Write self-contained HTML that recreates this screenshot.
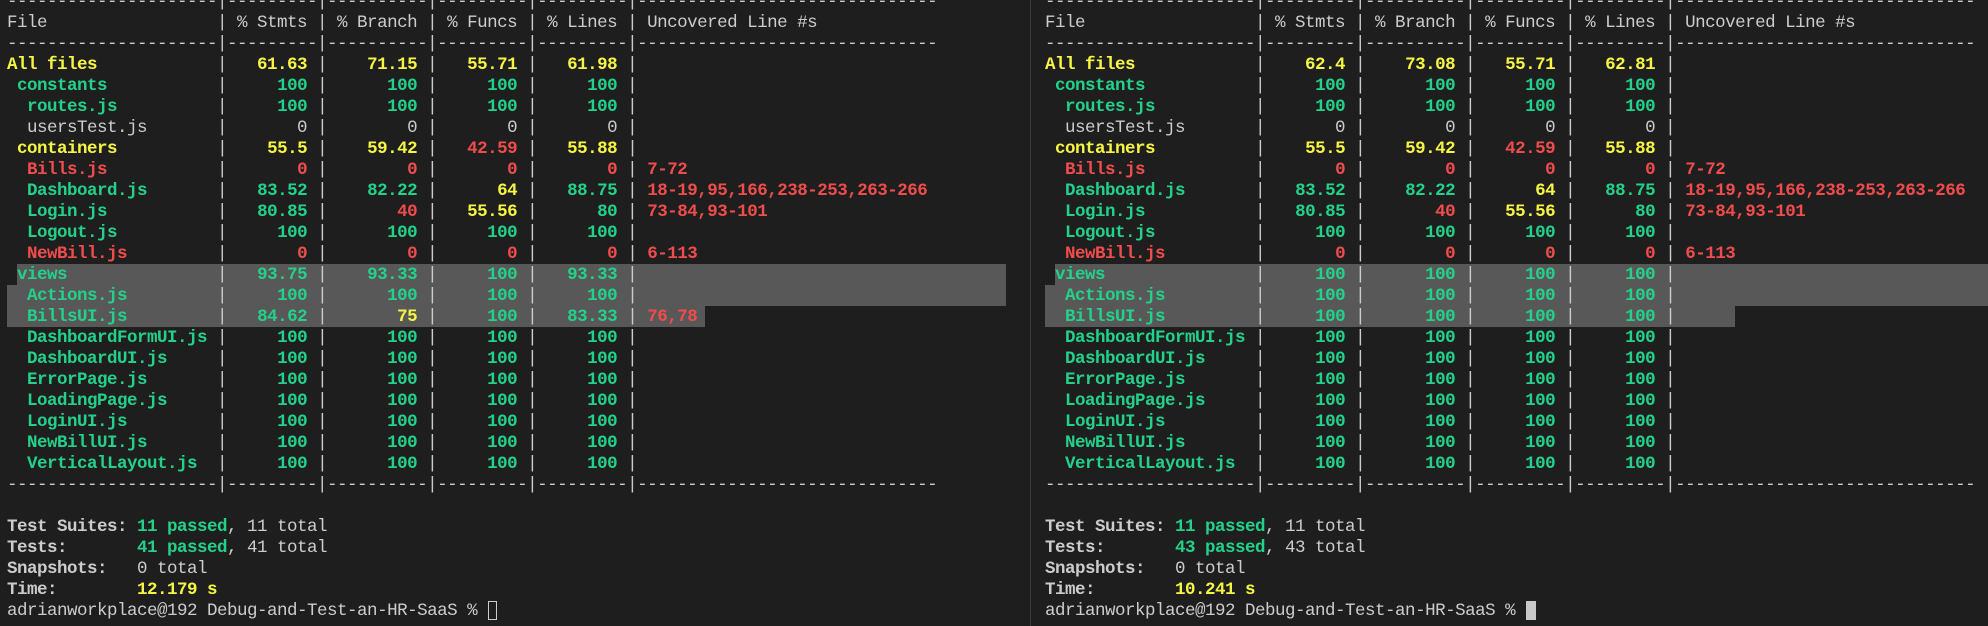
<!DOCTYPE html>
<html><head><meta charset="utf-8"><style>
html,body{margin:0;padding:0;background:#1e1e1e;width:1988px;height:626px;overflow:hidden;position:relative}
pre{position:absolute;top:-8.5px;margin:0;font-family:"Liberation Mono","DejaVu Sans Mono",monospace;font-size:17.5px;letter-spacing:-0.5px;line-height:21px;color:#cccccc;white-space:pre}
.g{color:#23d18b;font-weight:bold}.y{color:#f5f543;font-weight:bold}.r{color:#f14c4c;font-weight:bold}.b{font-weight:bold}.n{color:#cccccc}
.sel{position:absolute;background:#585858}
.div{position:absolute;left:1030px;top:0;width:1px;height:626px;background:#3c3c3c}
</style></head><body>
<div class="sel" style="left:17px;top:264px;width:989px;height:21px"></div>
<div class="sel" style="left:7px;top:285px;width:999px;height:21px"></div>
<div class="sel" style="left:7px;top:306px;width:698px;height:21px"></div>
<div class="sel" style="left:1055px;top:264px;width:933px;height:21px"></div>
<div class="sel" style="left:1045px;top:285px;width:943px;height:21px"></div>
<div class="sel" style="left:1045px;top:306px;width:690px;height:21px"></div>
<div class="div"></div>
<div style="position:absolute;left:488px;top:601px;width:9px;height:19px;border:1px solid #cccccc;box-sizing:border-box"></div>
<div style="position:absolute;left:1526px;top:601px;width:10px;height:19px;background:#c8c8c8"></div>
<pre id="L" style="left:7px"></pre>
<pre id="R" style="left:1045px"></pre>
<script>
function pad(s,n){while(s.length<n)s+=' ';return s}
function lpad(s,n){while(s.length<n)s=' '+s;return s}
function sp(c,t){return c?'<span class="'+c+'">'+t+'</span>':t}
var dash='-'.repeat(21)+'|'+'-'.repeat(9)+'|'+'-'.repeat(10)+'|'+'-'.repeat(9)+'|'+'-'.repeat(9)+'|'+'-'.repeat(30);
function row(ind,name,nc,v,unc){
  var s=' '.repeat(ind)+sp(nc,name)+' '.repeat(21-ind-name.length)+'|';
  var w=[7,8,7,7];
  for(var i=0;i<4;i++){s+=' '+sp(v[i][1],lpad(v[i][0],w[i]))+' |';}
  if(unc)s+=' '+sp('r',unc);
  return s;
}
function all(c,val){return [[val,c],[val,c],[val,c],[val,c]]}
function build(d){
  var L=[];
  L.push(dash);
  L.push(pad('File',21)+'| % Stmts | % Branch | % Funcs | % Lines | Uncovered Line #s');
  L.push(dash);
  L.push(row(0,'All files','y',d.all));
  L.push(row(1,'constants','g',all('g','100')));
  L.push(row(2,'routes.js','g',all('g','100')));
  L.push(row(2,'usersTest.js','',all('n','0')));
  L.push(row(1,'containers','y',[['55.5','y'],['59.42','y'],['42.59','r'],['55.88','y']]));
  L.push(row(2,'Bills.js','r',all('r','0'),'7-72'));
  L.push(row(2,'Dashboard.js','g',[['83.52','g'],['82.22','g'],['64','y'],['88.75','g']],'18-19,95,166,238-253,263-266'));
  L.push(row(2,'Login.js','g',[['80.85','g'],['40','r'],['55.56','y'],['80','g']],'73-84,93-101'));
  L.push(row(2,'Logout.js','g',all('g','100')));
  L.push(row(2,'NewBill.js','r',all('r','0'),'6-113'));
  L.push(row(1,'views','g',d.views));
  L.push(row(2,'Actions.js','g',all('g','100')));
  L.push(row(2,'BillsUI.js','g',d.bills,d.billsU));
  ['DashboardFormUI.js','DashboardUI.js','ErrorPage.js','LoadingPage.js','LoginUI.js','NewBillUI.js','VerticalLayout.js'].forEach(function(n){L.push(row(2,n,'g',all('g','100')));});
  L.push(dash);
  L.push('');
  L.push('<span class="b">Test Suites: </span><span class="g">11 passed</span>, 11 total');
  L.push('<span class="b">Tests:       </span><span class="g">'+d.t+' passed</span>, '+d.t+' total');
  L.push('<span class="b">Snapshots:   </span>0 total');
  L.push('<span class="b">Time:        </span><span class="y">'+d.time+'</span>');
  L.push('adrianworkplace@192 Debug-and-Test-an-HR-SaaS % ');
  return L.join('\n');
}
document.getElementById('L').innerHTML=build({
  all:[['61.63','y'],['71.15','y'],['55.71','y'],['61.98','y']],
  views:[['93.75','g'],['93.33','g'],['100','g'],['93.33','g']],
  bills:[['84.62','g'],['75','y'],['100','g'],['83.33','g']],billsU:'76,78',
  t:'41',time:'12.179 s'});
document.getElementById('R').innerHTML=build({
  all:[['62.4','y'],['73.08','y'],['55.71','y'],['62.81','y']],
  views:all('g','100'),bills:all('g','100'),billsU:'',
  t:'43',time:'10.241 s'});
</script>
</body></html>
